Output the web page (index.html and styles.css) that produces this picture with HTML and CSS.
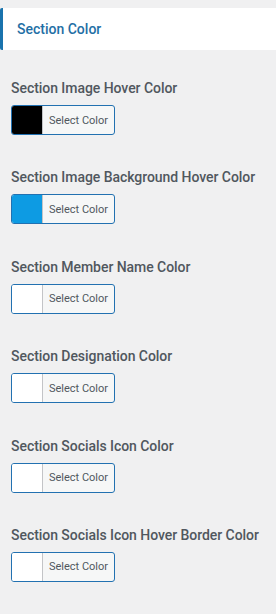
FILE: index.html
```html
<!DOCTYPE html>
<html>
<head>
<meta charset="utf-8">
<link rel="stylesheet" href="styles.css">
</head>
<body>
<div class="panel">
  <div class="section-head">Section Color</div>
  <div class="fields">
    <div class="field">
      <div class="label">Section Image Hover Color</div>
      <button class="picker"><span class="swatch swatch-black"></span><span class="picker-text">Select Color</span></button>
    </div>
    <div class="field">
      <div class="label">Section Image Background Hover Color</div>
      <button class="picker"><span class="swatch swatch-blue"></span><span class="picker-text">Select Color</span></button>
    </div>
    <div class="field">
      <div class="label">Section Member Name Color</div>
      <button class="picker"><span class="swatch"></span><span class="picker-text">Select Color</span></button>
    </div>
    <div class="field">
      <div class="label">Section Designation Color</div>
      <button class="picker"><span class="swatch"></span><span class="picker-text">Select Color</span></button>
    </div>
    <div class="field">
      <div class="label">Section Socials Icon Color</div>
      <button class="picker"><span class="swatch"></span><span class="picker-text">Select Color</span></button>
    </div>
    <div class="field">
      <div class="label">Section Socials Icon Hover Border Color</div>
      <button class="picker"><span class="swatch"></span><span class="picker-text">Select Color</span></button>
    </div>
  </div>
</div>
</body>
</html>
```

FILE: styles.css
```css
html, body {
  margin: 0;
  padding: 0;
  background: #f0f0f1;
  font-family: Roboto, "Liberation Sans", sans-serif;
}

.panel {
  padding-top: 8px;
}

.section-head {
  height: 42px;
  box-sizing: border-box;
  background: #fff;
  border-left: 3px solid #1973ad;
  border-radius: 2px 0 0 2px;
  padding-left: 14px;
  display: flex;
  align-items: center;
  color: #1f6fa5;
  font-size: 14px;
  font-weight: 500;
}

.fields {
  display: flex;
  flex-direction: column;
  padding-top: 28px;
  padding-left: 11px;
}

.field {
  display: flex;
  flex-direction: column;
  align-items: flex-start;
  height: 89.4px;
}

.label {
  font-size: 14px;
  line-height: 20px;
  font-weight: 500;
  color: #50575e;
  margin-bottom: 7px;
  white-space: nowrap;
  letter-spacing: -0.05px;
}

.picker {
  display: flex;
  align-items: stretch;
  width: 104px;
  height: 30px;
  padding: 0;
  margin: 0;
  border: 1px solid #2271b1;
  border-radius: 3px;
  background: #f6f7f7;
  overflow: hidden;
  font-family: inherit;
  cursor: pointer;
}

.swatch {
  width: 30px;
  flex: none;
  background: #fff;
  border-right: 1px solid #c3c4c7;
}

.swatch-black { background: #000; }
.swatch-blue { background: #0d9be3; }

.picker-text {
  flex: 1;
  display: flex;
  align-items: center;
  justify-content: center;
  font-size: 11px;
  color: #50575e;
}
```
